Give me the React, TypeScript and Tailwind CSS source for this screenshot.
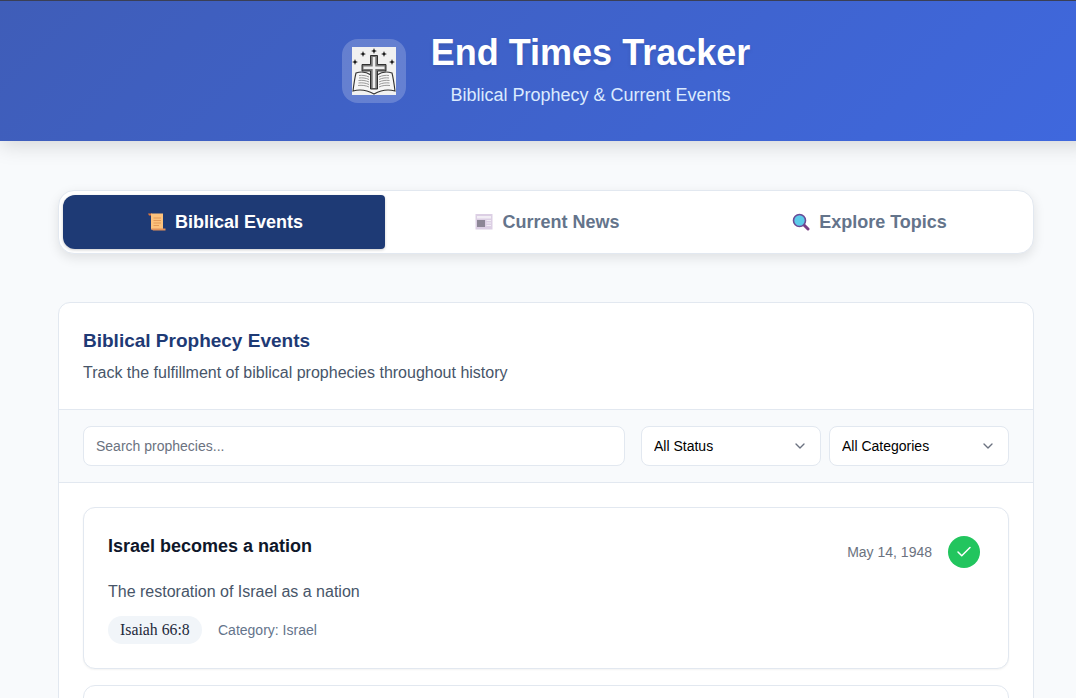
import React from 'react';
import { Check, ChevronDown } from 'lucide-react';

// logo: open book, cross and stars
const Logo = () => (
  <svg width="44" height="48" viewBox="0 0 44 48" className="blur-[0.6px]">
    <rect width="44" height="48" fill="#f1f1f1" />
    {[[11, 7], [22, 4], [32, 7], [3, 15], [40, 15]].map(([x, y], i) => (
      <path key={i} d={`M${x} ${y - 3}L${x + 0.8} ${y - 0.8}L${x + 3} ${y}L${x + 0.8} ${y + 0.8}L${x} ${y + 3}L${x - 0.8} ${y + 0.8}L${x - 3} ${y}L${x - 0.8} ${y - 0.8}Z`} fill="#111" />
    ))}
    <path d="M1 44C2 36 3 30 4 26C10 24 16 26 19 28V41H25V28C28 26 34 24 40 26C41 30 42 36 43 44C36 42 29 43 22 47C15 43 8 42 1 44Z" fill="#f6f6f6" stroke="#333" strokeWidth="1.1" />
    <path d="M7 28.5C10 28 14 28.5 17 30M7 31C10 30.5 14 31 17 32.5M6.5 33.5C10 33 14 33.5 17 35M6.5 36C10 35.5 14 36 17 37.5M6 38.5C10 38 14 38.5 17 40M37 28.5C34 28 30 28.5 27 30M37 31C34 30.5 30 31 27 32.5M37.5 33.5C34 33 30 33.5 27 35M37.5 36C34 35.5 30 36 27 37.5M38 38.5C34 38 30 38.5 27 40" stroke="#999" strokeWidth="1" fill="none" />
    <path d="M18.5 8.5H25.5V17.5H34V24H25.5V42H18.5V24H10V17.5H18.5Z" fill="#777" stroke="#222" strokeWidth="0.9" />
    <path d="M22 10V41M11.5 20.7H32.5" stroke="#eee" strokeWidth="2.6" />
  </svg>
);

const ScrollIcon = () => (
  <svg width="18" height="18" viewBox="0 0 18 18">
    <path d="M0 0.5H4V2.5H1Z" fill="#e0763c" />
    <rect x="3" y="0.5" width="12" height="16" fill="#fdc27c" />
    <path d="M3 15.5H17.5V17.5H5Z" fill="#e0905a" />
    <path d="M5.5 5H13M5.5 7.5H13M5.5 10H13M5.5 12.5H11" stroke="#e39a58" strokeWidth="1" />
  </svg>
);

const NewsIcon = () => (
  <svg width="18" height="18" viewBox="0 0 18 18">
    <rect x="0.5" y="1" width="17" height="15.5" fill="#dccfe4" />
    <rect x="2" y="3" width="14" height="2.5" fill="#f2eef5" />
    <rect x="2" y="7" width="8" height="7" fill="#8d8796" />
    <path d="M11.5 7.5H16M11.5 10H16M11.5 12.5H16" stroke="#f2eef5" strokeWidth="1" />
  </svg>
);

const SearchIcon = () => (
  <svg width="18" height="18" viewBox="0 0 18 18">
    <path d="M11.5 11.5L16 16" stroke="#7a3f86" strokeWidth="3" strokeLinecap="round" />
    <circle cx="7.5" cy="7.5" r="6" fill="#5ccbea" stroke="#6a4a96" strokeWidth="1.6" />
  </svg>
);

const tabs = [
  { label: 'Biblical Events', icon: <ScrollIcon />, active: true },
  { label: 'Current News', icon: <NewsIcon />, active: false },
  { label: 'Explore Topics', icon: <SearchIcon />, active: false },
];

const Select = ({ label }: { label: string }) => (
  <div className="relative w-[180px]">
    <select className="w-full h-10 appearance-none bg-white border border-[#e2e8f0] rounded-lg pl-3 pr-8 text-sm text-black">
      <option>{label}</option>
    </select>
    <ChevronDown size={16} className="absolute right-[13px] top-3 text-[#6b7280] pointer-events-none" />
  </div>
);

export default function App() {
  return (
    <div className="h-[698px] overflow-hidden bg-[#f8fafc] font-['Liberation_Sans',Arial,sans-serif]">
      <div className="w-[1092px]">
        <header className="h-[141px] border-t border-[#3a3f55] bg-[linear-gradient(135deg,#3f5db8,#3f68de)] shadow-[0_4px_20px_rgba(0,0,0,0.15)] flex items-center justify-center gap-[25px]">
          <div className="w-16 h-16 rounded-2xl bg-white/20 flex items-center justify-center">
            <Logo />
          </div>
          <div className="text-center -mt-[6px]">
            <h1 className="text-[36px] leading-[43px] font-bold text-white [text-shadow:0_2px_4px_rgba(0,0,0,0.1)]">End Times Tracker</h1>
            <p className="mt-[10px] text-lg leading-[22px] text-[#dbeafe]">Biblical Prophecy &amp; Current Events</p>
          </div>
        </header>

        <main className="px-[58px] pt-[49px]">
          <nav className="h-16 bg-white border border-[#e2e8f0] rounded-2xl p-1 flex shadow-[0_4px_12px_rgba(0,0,0,0.1)]">
            {tabs.map((t) => (
              <button
                key={t.label}
                className={
                  t.active
                    ? 'flex-1 flex items-center justify-center gap-2 rounded-l-xl rounded-r bg-[#1e3a75] text-white text-lg font-bold shadow-[0_1px_3px_rgba(0,0,0,0.2)]'
                    : 'flex-1 flex items-center justify-center gap-2 text-[#64748b] text-lg font-bold'
                }
              >
                <span className="w-[22px] pl-[3px] flex">{t.icon}</span>
                <span>{t.label}</span>
              </button>
            ))}
          </nav>

          <section className="mt-12 bg-white border border-[#e2e8f0] rounded-xl">
            <div className="px-6 pt-[26px] h-[106px]">
              <h2 className="text-[19px] leading-6 font-bold text-[#1e3a75]">Biblical Prophecy Events</h2>
              <p className="mt-2 text-base leading-6 text-[#475569]">Track the fulfillment of biblical prophecies throughout history</p>
            </div>
            <div className="h-[74px] bg-[#f8fafc] border-y border-[#e2e8f0] px-6 flex items-center gap-2">
              <input
                placeholder="Search prophecies..."
                className="flex-1 h-10 mr-2 bg-white border border-[#e2e8f0] rounded-lg px-3 text-sm placeholder:text-[#6b7280]"
              />
              <Select label="All Status" />
              <Select label="All Categories" />
            </div>
            <div className="p-6 flex flex-col gap-4">
              <article className="h-[162px] bg-white border border-[#e2e8f0] rounded-xl px-6 pt-[27px] shadow-[0_1px_2px_rgba(0,0,0,0.05)]">
                <div className="flex items-start justify-between pr-1">
                  <h3 className="text-lg leading-[22px] font-bold text-[#0f172a]">Israel becomes a nation</h3>
                  <div className="flex items-center gap-4 mt-[1px]">
                    <span className="text-sm text-[#6b7280]">May 14, 1948</span>
                    <span className="w-8 h-8 rounded-full bg-[#22c55e] flex items-center justify-center">
                      <Check size={18} strokeWidth={2} className="text-white" />
                    </span>
                  </div>
                </div>
                <p className="mt-3 text-base leading-6 text-[#475569]">The restoration of Israel as a nation</p>
                <div className="mt-3 flex items-center gap-4">
                  <span className="h-7 w-[94px] px-3 rounded-full bg-[#f1f5f9] flex items-center whitespace-nowrap font-['Liberation_Serif',serif] text-[15.8px] text-[#1e293b]">Isaiah 66:8</span>
                  <span className="text-sm text-[#64748b]">Category: Israel</span>
                </div>
              </article>
              <article className="h-[162px] bg-white border border-[#e2e8f0] rounded-xl" />
            </div>
          </section>
        </main>
      </div>
    </div>
  );
}
